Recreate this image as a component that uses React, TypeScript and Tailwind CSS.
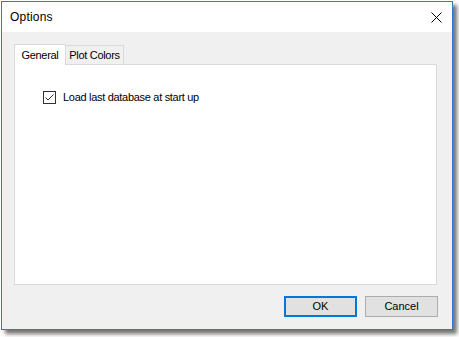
export default function App() {
  return (
    <div className="w-[459px] h-[337px] bg-white pl-px pt-px" style={{ fontFamily: '"Liberation Sans", Arial, sans-serif' }}>
      <div className="w-[452px] h-[329px] border border-[#2b7bd4] bg-[#f0f0f0] flex flex-col shadow-[4px_4px_4px_rgba(0,0,0,0.55)]">
        <div className="h-[30px] bg-white flex items-center justify-between pl-2 pr-[10px] shrink-0">
          <span className="text-[12px] text-black tracking-[0.2px]">Options</span>
          <svg width="11" height="11" viewBox="0 0 11 11">
            <path d="M0.5 0.5L10.5 10.5M10.5 0.5L0.5 10.5" stroke="#000" strokeWidth="1" />
          </svg>
        </div>
        <div className="flex-1 flex flex-col pl-3 pr-[14px] pt-3">
          <div className="flex items-end h-[21px] relative z-10">
            <div className="h-[21px] w-[52px] bg-white border border-b-0 border-[#d9d9d9] flex items-center justify-center text-[11px] tracking-[-0.3px] text-black pt-px">
              General
            </div>
            <div className="h-[19px] w-[58px] bg-[#f0f0f0] border border-l-0 border-b-0 border-[#d9d9d9] flex items-center justify-center text-[11px] tracking-[-0.3px] text-black mb-px pt-px">
              Plot Colors
            </div>
          </div>
          <div className="w-[423px] h-[221px] -mt-px bg-white border border-[#d9d9d9] pl-[28px] pt-[24px]">
            <label className="flex items-center gap-[7px] text-[11px] tracking-[-0.3px] text-black">
              <span className="w-[13px] h-[13px] border border-[#333] bg-white flex items-center justify-center">
                <svg width="11" height="11" viewBox="0 0 11 11">
                  <path d="M1.5 5.5L4 8L9.5 2.5" stroke="#333" strokeWidth="1" fill="none" />
                </svg>
              </span>
              Load last database at start up
            </label>
          </div>
          <div className="flex justify-end gap-[8px] mt-[11px]">
            <button className="w-[73px] h-[21px] border-2 border-[#0078d7] bg-[#e1e1e1] text-[11px] text-black flex items-center justify-center">
              OK
            </button>
            <button className="w-[73px] h-[21px] border border-[#adadad] bg-[#e1e1e1] text-[11px] text-black flex items-center justify-center">
              Cancel
            </button>
          </div>
        </div>
      </div>
    </div>
  )
}
